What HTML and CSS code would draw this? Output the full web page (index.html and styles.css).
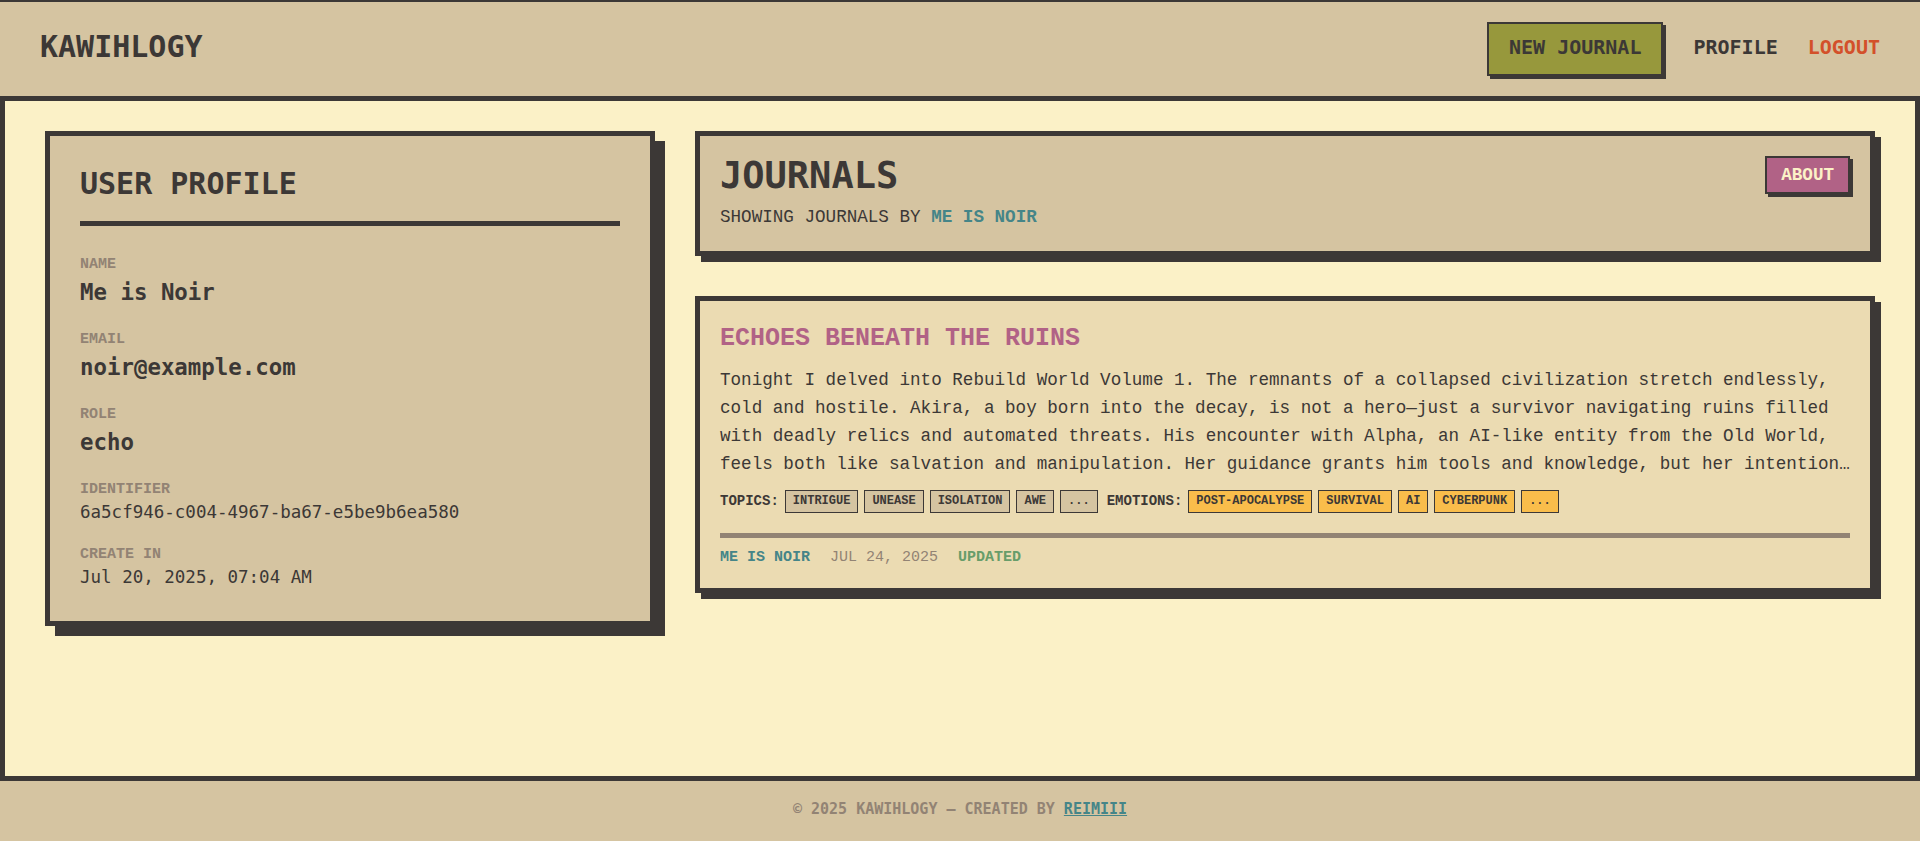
FILE: index.html
```html
<!DOCTYPE html>
<html lang="en">
<head>
<meta charset="utf-8">
<title>Kawihlogy</title>
<link rel="stylesheet" href="styles.css">
</head>
<body>
<header class="site-header">
  <a class="logo" href="#">KAWIHLOGY</a>
  <nav class="nav">
    <a class="btn-new" href="#">NEW JOURNAL</a>
    <a class="nav-link" href="#">PROFILE</a>
    <a class="nav-link nav-logout" href="#">LOGOUT</a>
  </nav>
</header>
<main class="main">
  <aside class="profile-card">
    <h2 class="profile-title">USER PROFILE</h2>
    <div class="field">
      <div class="field-label">NAME</div>
      <div class="field-value">Me is Noir</div>
    </div>
    <div class="field">
      <div class="field-label">EMAIL</div>
      <div class="field-value">noir@example.com</div>
    </div>
    <div class="field">
      <div class="field-label">ROLE</div>
      <div class="field-value">echo</div>
    </div>
    <div class="field">
      <div class="field-label">IDENTIFIER</div>
      <div class="field-value field-value-small">6a5cf946-c004-4967-ba67-e5be9b6ea580</div>
    </div>
    <div class="field">
      <div class="field-label">CREATE IN</div>
      <div class="field-value field-value-small">Jul 20, 2025, 07:04 AM</div>
    </div>
  </aside>
  <section class="journals">
    <div class="journals-head">
      <div class="journals-head-text">
        <h1 class="journals-title">JOURNALS</h1>
        <p class="journals-sub">SHOWING JOURNALS BY <span class="author">ME IS NOIR</span></p>
      </div>
      <a class="btn-about" href="#">ABOUT</a>
    </div>
    <article class="post">
      <h3 class="post-title">ECHOES BENEATH THE RUINS</h3>
      <p class="post-excerpt">Tonight I delved into Rebuild World Volume 1. The remnants of a collapsed civilization stretch endlessly, cold and hostile. Akira, a boy born into the decay, is not a hero—just a survivor navigating ruins filled with deadly relics and automated threats. His encounter with Alpha, an AI-like entity from the Old World, feels both like salvation and manipulation. Her guidance grants him tools and knowledge, but her intention…</p>
      <div class="tags">
        <span class="tags-label">TOPICS:</span>
        <span class="tag">INTRIGUE</span>
        <span class="tag">UNEASE</span>
        <span class="tag">ISOLATION</span>
        <span class="tag">AWE</span>
        <span class="tag">...</span>
        <span class="tags-label tags-label-second">EMOTIONS:</span>
        <span class="tag tag-emotion">POST-APOCALYPSE</span>
        <span class="tag tag-emotion">SURVIVAL</span>
        <span class="tag tag-emotion">AI</span>
        <span class="tag tag-emotion">CYBERPUNK</span>
        <span class="tag tag-emotion">...</span>
      </div>
      <div class="post-meta">
        <span class="meta-author">ME IS NOIR</span>
        <span class="meta-date">JUL 24, 2025</span>
        <span class="meta-status">UPDATED</span>
      </div>
    </article>
  </section>
</main>
<footer class="site-footer">© 2025 KAWIHLOGY — CREATED BY <a href="#">REIMIII</a></footer>
</body>
</html>
```
FILE: styles.css
```css
* {
  box-sizing: border-box;
  margin: 0;
  padding: 0;
}

html, body {
  height: 100%;
}

body {
  min-height: 100vh;
  display: flex;
  flex-direction: column;
  background: #d5c4a1;
  color: #3c3836;
  font-family: "Liberation Mono", monospace;
}

/* Header */
.site-header {
  flex: none;
  height: 96px;
  border-top: 2px solid #3c3836;
  background: #d5c4a1;
  display: flex;
  align-items: center;
  justify-content: space-between;
  padding: 0 40px 0 40px;
}

.logo {
  font-family: "DejaVu Sans Mono", monospace;
  font-weight: 700;
  font-size: 30px;
  line-height: normal;
  color: #3c3836;
  text-decoration: none;
  margin-bottom: 5px;
}

.nav {
  display: flex;
  align-items: baseline;
  gap: 30px;
}

.nav a {
  font-family: "DejaVu Sans Mono", monospace;
  font-weight: 700;
  font-size: 20px;
  line-height: 24px;
  text-decoration: none;
  color: #3c3836;
}

.nav .btn-new {
  background: #97983c;
  border: 2px solid #3c3836;
  padding: 11px 20px 15px;
  box-shadow: 3px 3px 0 #3c3836;
}

.nav .nav-logout {
  color: #d3502a;
}

/* Main */
.main {
  flex: 1;
  background: #fbf1c7;
  border: 5px solid #3c3836;
  padding: 30px 40px;
  display: grid;
  grid-template-columns: 610px 1fr;
  gap: 40px;
  align-items: start;
}

/* Profile card */
.profile-card {
  background: #d5c4a1;
  border: 5px solid #3c3836;
  box-shadow: 10px 10px 0 #3c3836;
  padding: 30px 30px 34px;
}

.profile-title {
  font-family: "DejaVu Sans Mono", monospace;
  font-weight: 700;
  font-size: 30px;
  line-height: normal;
  padding-bottom: 20px;
  border-bottom: 5px solid #3c3836;
  margin-bottom: 29px;
}

.field {
  margin-bottom: 23px;
}

.field:last-child {
  margin-bottom: 0;
}

.field-label {
  font-family: "Liberation Mono", monospace;
  font-weight: 700;
  font-size: 15px;
  line-height: 20px;
  color: #928374;
  margin-bottom: 2px;
}

.field-value {
  font-family: "DejaVu Sans Mono", monospace;
  font-weight: 700;
  font-size: 22.4px;
  line-height: 30px;
}

.field-value-small {
  font-weight: 400;
  font-size: 17.5px;
  line-height: 20px;
}

/* Journals column */
.journals {
  display: flex;
  flex-direction: column;
  gap: 40px;
}

.journals-head {
  background: #d5c4a1;
  border: 5px solid #3c3836;
  box-shadow: 6px 6px 0 #3c3836;
  padding: 20px;
  display: flex;
  justify-content: space-between;
  align-items: flex-start;
}

.journals-title {
  font-family: "DejaVu Sans Mono", monospace;
  font-weight: 700;
  font-size: 37px;
  line-height: 40px;
}

.journals-sub {
  font-size: 17.6px;
  line-height: 28px;
  margin-top: 7px;
}

.author {
  color: #458588;
  font-weight: 700;
}

.btn-about {
  background: #b16286;
  color: #fbf1c7;
  border: 2px solid #3c3836;
  box-shadow: 3px 3px 0 #3c3836;
  padding: 7px 14px;
  font-family: "Liberation Mono", monospace;
  font-weight: 700;
  font-size: 17.6px;
  line-height: 20px;
  text-decoration: none;
}

/* Post */
.post {
  background: #ebdbb2;
  border: 5px solid #3c3836;
  box-shadow: 6px 6px 0 #3c3836;
  padding: 20px;
}

.post-title {
  font-family: "Liberation Mono", monospace;
  font-weight: 700;
  font-size: 25px;
  line-height: 35px;
  color: #b16286;
}

.post-excerpt {
  font-size: 17.6px;
  line-height: 28px;
  margin-top: 10px;
  margin-right: -8px;
}

.tags {
  display: flex;
  flex-wrap: wrap;
  align-items: center;
  gap: 6px;
  margin-top: 12px;
}

.tags-label {
  font-weight: 700;
  font-size: 14px;
  line-height: 23px;
}

.tags-label-second {
  margin-left: 3px;
}

.tag {
  font-weight: 700;
  font-size: 12px;
  line-height: 15px;
  padding: 3px 7px;
  border: 1px solid #3c3836;
  background: #d5c4a1;
}

.tag-emotion {
  background: #f9bd4b;
}

.post-meta {
  margin-top: 20px;
  border-top: 5px solid #928374;
  padding-top: 10px;
  display: flex;
  gap: 20px;
  font-size: 15px;
  line-height: 20px;
}

.meta-author {
  color: #458588;
  font-weight: 700;
}

.meta-date {
  color: #928374;
}

.meta-status {
  color: #689d6a;
  font-weight: 700;
}

/* Footer */
.site-footer {
  flex: none;
  height: 60px;
  padding-top: 20px;
  text-align: center;
  font-family: "DejaVu Sans Mono", monospace;
  font-weight: 700;
  font-size: 15px;
  line-height: 17px;
  color: #928374;
}

.site-footer a {
  color: #458588;
  text-decoration: underline;
}
```
